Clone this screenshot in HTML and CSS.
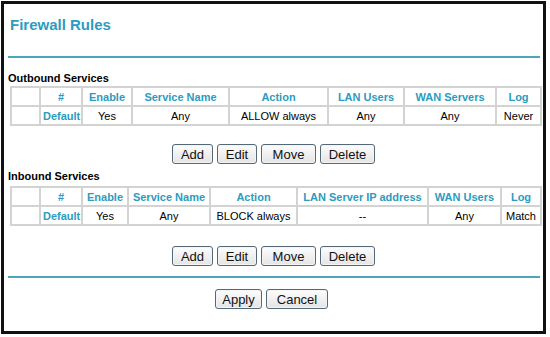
FILE: index.html
```html
<!DOCTYPE html>
<html lang="en">
<head>
  <meta charset="UTF-8" />
  <title>Firewall Rules</title>
  <link rel="stylesheet" href="styles.css">
</head>
<body>
  <div class="frame">
    <h1 class="page-title">Firewall Rules</h1>
    <div class="rule"></div>

    <!-- Outbound -->
    <div class="section-label">Outbound Services</div>
    <table class="rules out">
      <colgroup>
        <col style="width:29px"><col style="width:42px"><col style="width:50px"><col style="width:97px">
        <col style="width:99px"><col style="width:76px"><col style="width:92px"><col style="width:45px">
      </colgroup>
      <tr>
        <th></th><th>#</th><th>Enable</th><th>Service Name</th><th>Action</th><th>LAN Users</th><th>WAN Servers</th><th>Log</th>
      </tr>
      <tr>
        <td></td><td class="link">Default</td><td>Yes</td><td>Any</td><td>ALLOW always</td><td>Any</td><td>Any</td><td>Never</td>
      </tr>
    </table>
    <div class="btn-row edit-row">
      <button class="btn w-add">Add</button>
      <button class="btn w-edit">Edit</button>
      <button class="btn w-move">Move</button>
      <button class="btn w-del">Delete</button>
    </div>

    <!-- Inbound -->
    <div class="section-label in-label">Inbound Services</div>
    <table class="rules in">
      <colgroup>
        <col style="width:29px"><col style="width:42px"><col style="width:46px"><col style="width:82px">
        <col style="width:87px"><col style="width:131px"><col style="width:73px"><col style="width:40px">
      </colgroup>
      <tr>
        <th></th><th>#</th><th>Enable</th><th>Service Name</th><th>Action</th><th>LAN Server IP address</th><th>WAN Users</th><th>Log</th>
      </tr>
      <tr>
        <td></td><td class="link">Default</td><td>Yes</td><td>Any</td><td>BLOCK always</td><td>--</td><td>Any</td><td>Match</td>
      </tr>
    </table>
    <div class="btn-row edit-row lower">
      <button class="btn w-add">Add</button>
      <button class="btn w-edit">Edit</button>
      <button class="btn w-move">Move</button>
      <button class="btn w-del">Delete</button>
    </div>

    <div class="rule bottom"></div>
    <div class="btn-row apply-row">
      <button class="btn w-apply">Apply</button>
      <button class="btn w-cancel">Cancel</button>
    </div>
  </div>
</body>
</html>
```

FILE: styles.css
```css
body {
  margin: 0;
  background: #fff;
  font-family: 'Liberation Sans', Arial, sans-serif;
  color: #000;
}

.frame {
  margin: 1px 0 0 1px;
  width: 532px;
  height: 327px;
  border: 3px solid #111;
  padding: 0 3px 0 4px;
}

.page-title {
  margin: 0;
  padding: 12px 0 0 2px;
  height: 40px;
  font-size: 15px;
  font-weight: bold;
  color: #2b9cc0;
}

.rule {
  height: 2px;
  background: #4aa6b8;
}

.section-label {
  margin-top: 14px;
  height: 14px;
  font-size: 11px;
  font-weight: bold;
  line-height: 12px;
}

.in-label {
  margin-top: 6px;
  height: 16px;
}

.rules {
  margin-left: 2px;
  width: 530px;
  table-layout: fixed;
  border-collapse: collapse;
  font-size: 11px;
}

.rules th,
.rules td {
  border: 2px solid #d3d3d3;
  height: 17px;
  padding: 0 2px;
  text-align: center;
  white-space: nowrap;
  overflow: hidden;
}

.rules th {
  color: #2b9cc0;
  font-weight: bold;
}

.rules td.link {
  color: #2b9cc0;
  font-weight: bold;
}

.btn-row {
  display: flex;
  gap: 4px;
}

.edit-row {
  margin: 18px 0 0 164px;
}

.edit-row.lower {
  margin-top: 20px;
}

.apply-row {
  margin: 11px 0 0 207px;
}

.rule.bottom {
  margin-top: 10px;
}

.btn {
  height: 20px;
  padding: 0;
  font-family: 'Liberation Sans', Arial, sans-serif;
  font-size: 13px;
  color: #111;
  background: linear-gradient(#fdfdfd, #e4e4e4);
  border: 1px solid #55687a;
  border-radius: 3px;
  box-shadow: inset 0 0 0 1px #f4f4f4;
}

.w-add { width: 41px; }
.w-edit { width: 40px; }
.w-move { width: 55px; }
.w-del { width: 55px; }
.w-apply { width: 47px; }
.w-cancel { width: 62px; }
```
